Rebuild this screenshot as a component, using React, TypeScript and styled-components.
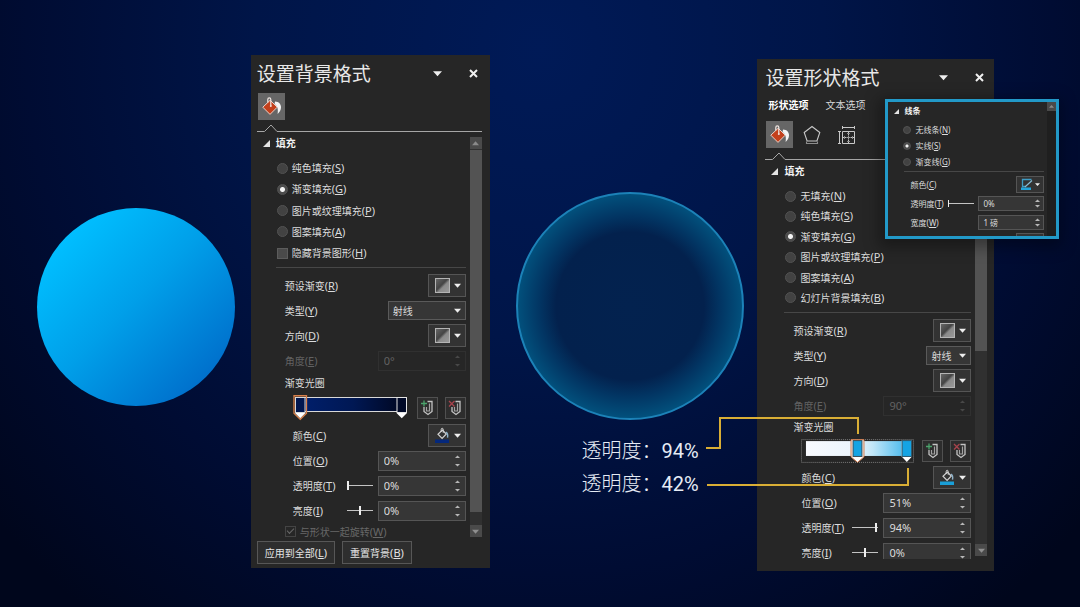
import React, { useId } from "react";
import styled, { createGlobalStyle, css } from "styled-components";

const GlobalStyle = createGlobalStyle`
  *, *::before, *::after { box-sizing: border-box; }
  body {
    margin: 0;
    background: #00061a;
    color: #dcdcdc;
    font-family: "Noto Sans", "Noto Sans CJK SC", sans-serif;
    font-size: 10px;
    line-height: 16px;
  }
  button, input, select { font: inherit; color: inherit; margin: 0; }
`;

/* ---------- slide ---------- */

const Slide = styled.main`
  min-height: 100vh;
  overflow: hidden;
  display: grid;
  grid-template-columns:
    minmax(8px, 37fr) 198px minmax(8px, 16fr) 239px minmax(8px, 26fr)
    228px minmax(8px, 14fr) 237px minmax(66px, 86fr);
  align-items: start;
  padding: 55px 0 36px;
  background: radial-gradient(ellipse 66% 120% at 50% 8%, #001a57 0%, #001548 40%, #000c33 72%, #00061c 100%);
`;

const SolidDisc = styled.div`
  grid-column: 2;
  margin-top: 153px;
  height: 198px;
  border-radius: 50%;
  background: linear-gradient(135deg, #00bfff 14%, #009fe9 48%, #0070cc 86%);
`;

const GlowColumn = styled.div`
  grid-column: 6;
  margin-top: 137px;
  display: flex;
  flex-direction: column;
`;

const GlowDisc = styled.div`
  height: 228px;
  border-radius: 50%;
  border: 2px solid #1c82b8;
  background: radial-gradient(circle closest-side, #03224f 0%, #03214d 66%, #023462 80%, #02507c 100%);
`;

const Callouts = styled.dl`
  margin: 15px 0 0 66px;
  color: #e6ecf5;
  font-family: Roboto, "Noto Sans CJK SC", sans-serif;
  font-size: 20px;
  font-weight: 300;
  line-height: 33px;
`;

const Callout = styled.div`
  display: flex;
  white-space: nowrap;
`;

const CalloutName = styled.dt``;

const CalloutValue = styled.dd`
  margin: 0;
  font-weight: 400;
`;

const Leader = styled.svg`
  position: absolute;
  left: -51px;
  top: 357px;
  pointer-events: none;
`;

/* ---------- panel shell ---------- */

const Panel = styled.section<{ $kind: "background" | "shape" }>`
  position: relative;
  display: flex;
  flex-direction: column;
  background: #262626;
  ${(p) =>
    p.$kind === "background"
      ? css`grid-column: 4; padding: 0 8px 4px 6px;`
      : css`grid-column: 8; margin-top: 4px; padding: 0 7px 12px 8px;`}
`;

const PanelHeader = styled.header`
  display: flex;
  align-items: center;
  height: 37px;
`;

const PanelTitle = styled.h2`
  flex: 1;
  margin: 0;
  font-size: 19px;
  line-height: 28px;
  font-weight: 400;
  color: #e8e8e8;
`;

const HeaderButton = styled.button`
  width: 16px;
  height: 16px;
  margin-left: 20px;
  padding: 0;
  border: 0;
  background: none;
  display: grid;
  place-items: center;
`;

const Tabs = styled.div`
  display: flex;
  gap: 17px;
  height: 24px;
  padding-left: 3px;
`;

const Tab = styled.button<{ $active?: boolean }>`
  height: 18px;
  padding: 0;
  border: 0;
  background: none;
  color: ${(p) => (p.$active ? "#ffffff" : "#d8d8d8")};
  font-weight: ${(p) => (p.$active ? 700 : 400)};
`;

const IconTabs = styled.div`
  display: flex;
  gap: 6px;
  margin: 1px 0 0 1px;
`;

const IconTab = styled.button<{ $active?: boolean }>`
  width: 27px;
  height: 27px;
  padding: 0;
  border: 0;
  display: block;
  background: ${(p) => (p.$active ? "#666666" : "transparent")};
  svg { display: block; }
`;

const NotchRule = styled.div`
  display: flex;
  height: 12px;
  svg { flex: none; display: block; }
  &::after {
    content: "";
    flex: 1;
    align-self: flex-end;
    height: 1px;
    background: #a6a6a6;
  }
`;

const Body = styled.div<{ $height: number }>`
  display: flex;
  gap: 4px;
  height: ${(p) => p.$height}px;
  overflow: hidden;
`;

const Content = styled.div`
  flex: 1;
  min-width: 0;
  display: flex;
  flex-direction: column;
  & > * { flex-shrink: 0; }
`;

const SectionTitle = styled.h3<{ $small?: boolean }>`
  display: flex;
  align-items: center;
  gap: ${(p) => (p.$small ? 5 : 6)}px;
  height: ${(p) => (p.$small ? 18 : 22)}px;
  margin: 0;
  padding-left: 6px;
  font-size: ${(p) => (p.$small ? 8 : 10)}px;
  font-weight: 700;
  color: #f2f2f2;
`;

const Mnemonic = styled.span`
  font-size: 11px;
`;

const Options = styled.div<{ $height: number; $small?: boolean }>`
  display: flex;
  flex-direction: column;
  justify-content: space-between;
  height: ${(p) => p.$height}px;
  margin: ${(p) => (p.$small ? "2px 0 0 15px" : "4px 0 0 20px")};
`;

const Option = styled.label<{ $small?: boolean; $dim?: boolean }>`
  display: flex;
  align-items: center;
  gap: 4px;
  height: ${(p) => (p.$small ? 16 : 20)}px;
  font-size: ${(p) => (p.$small ? 8 : 10)}px;
  color: ${(p) => (p.$dim ? "#686868" : "inherit")};
  white-space: nowrap;
  ${(p) => p.$small && css`${Mnemonic} { font-size: 8px; }`}
`;

const Radio = styled.input<{ $small?: boolean }>`
  appearance: none;
  flex: none;
  width: ${(p) => (p.$small ? 8 : 11)}px;
  height: ${(p) => (p.$small ? 8 : 11)}px;
  border: 1px solid #525252;
  border-radius: 50%;
  background: #424242;
  &:checked {
    background: radial-gradient(circle, #f4f4f4 ${(p) => (p.$small ? 1 : 2)}px, #4c4c4c ${(p) => (p.$small ? 2 : 3)}px);
  }
`;

const Check = styled.input`
  appearance: none;
  flex: none;
  width: 11px;
  height: 11px;
  border: 1px solid #5c5c5c;
  background: #4a4a4a;
  &:disabled { background: none; border-color: #444444; }
  &:checked::after {
    content: "";
    display: block;
    width: 7px;
    height: 4px;
    margin: 1px;
    border: solid #686868;
    border-width: 0 0 1px 1px;
    transform: rotate(-45deg);
  }
`;

const Divider = styled.hr<{ $small?: boolean }>`
  height: 1px;
  margin: ${(p) => (p.$small ? "1px 0 3px 16px" : "4px 0 5px 19px")};
  border: 0;
  background: #474747;
`;

const Row = styled.div<{ $indent: number; $height?: number; $small?: boolean; $dim?: boolean }>`
  display: flex;
  align-items: center;
  height: ${(p) => p.$height ?? (p.$small ? 19 : 25)}px;
  padding-left: ${(p) => p.$indent}px;
  font-size: ${(p) => (p.$small ? 8 : 10)}px;
  color: ${(p) => (p.$dim ? "#626262" : "inherit")};
  white-space: nowrap;
  ${(p) => p.$small && css`${Mnemonic} { font-size: 8px; }`}
`;

const RowLabel = styled.label`
  flex: 1;
`;

const DropButton = styled.button<{ $small?: boolean }>`
  display: flex;
  align-items: center;
  justify-content: space-between;
  width: ${(p) => (p.$small ? 28 : 38)}px;
  height: ${(p) => (p.$small ? 17 : 23)}px;
  padding: ${(p) => (p.$small ? "0 3px 0 4px" : "0 4px 0 6px")};
  border: 1px solid #555555;
  background: #333333;
  svg { display: block; }
`;

const SelectBox = styled.span<{ $wide?: boolean }>`
  display: grid;
  align-items: center;
  width: ${(p) => (p.$wide ? 78 : 45)}px;
  height: 19px;
  border: 1px solid #5a5a5a;
  background: #363636;
  select, svg { grid-area: 1 / 1; }
  select {
    appearance: none;
    width: 100%;
    height: 17px;
    padding: 0 0 0 4px;
    border: 0;
    background: none;
    line-height: 16px;
  }
  svg { justify-self: end; margin-right: 4px; pointer-events: none; }
`;

const SpinBox = styled.span<{ $small?: boolean; $dim?: boolean }>`
  display: flex;
  align-items: center;
  width: ${(p) => (p.$small ? 66 : 88)}px;
  height: ${(p) => (p.$small ? 15 : 20)}px;
  border: 1px solid ${(p) => (p.$dim ? "#303030" : "#555555")};
  background: ${(p) => (p.$dim ? "transparent" : "#363636")};
  font-size: ${(p) => (p.$small ? 8 : 11)}px;
  input {
    flex: 1;
    min-width: 0;
    height: 100%;
    padding: 0 0 0 ${(p) => (p.$small ? 4 : 5)}px;
    border: 0;
    background: none;
  }
`;

const Steppers = styled.span<{ $small?: boolean }>`
  display: flex;
  flex-direction: column;
  justify-content: space-between;
  width: ${(p) => (p.$small ? 11 : 15)}px;
  height: 100%;
`;

const Step = styled.button`
  display: grid;
  place-items: center;
  flex: 1;
  padding: 0;
  border: 0;
  background: none;
  svg { display: block; }
`;

const Range = styled.input<{ $small?: boolean }>`
  appearance: none;
  width: 26px;
  height: 10px;
  margin-right: ${(p) => (p.$small ? 4 : 5)}px;
  background: linear-gradient(#c4c4c4, #c4c4c4) center / 100% 1px no-repeat;
  &::-webkit-slider-thumb {
    appearance: none;
    width: ${(p) => (p.$small ? 1 : 2)}px;
    height: ${(p) => (p.$small ? 7 : 9)}px;
    background: #ededed;
  }
`;

const StopButton = styled.button`
  width: 21px;
  height: 22px;
  margin-left: 7px;
  padding: 0;
  border: 1px solid #505050;
  background: #2d2d2d;
  svg { display: block; }
`;

const StopTrack = styled.svg`
  display: block;
  margin-right: auto;
`;

const Scroll = styled.div<{ $small?: boolean }>`
  display: flex;
  flex-direction: column;
  width: ${(p) => (p.$small ? 9 : 12)}px;
  margin: ${(p) => (p.$small ? "0" : "5px 0 3px")};
  background: ${(p) => (p.$small ? "#1f1f1f" : "#303030")};
`;

const ScrollArrow = styled.button<{ $small?: boolean }>`
  display: grid;
  place-items: center;
  height: ${(p) => (p.$small ? 9 : 12)}px;
  padding: 0;
  border: 0;
  background: #4a4a4a;
  &:last-child:not(:first-child) { margin-top: auto; }
`;

const ScrollThumb = styled.div<{ $height: number }>`
  height: ${(p) => p.$height}px;
  margin-top: 1px;
  background: #535353;
`;

const Footer = styled.footer`
  display: flex;
  gap: 7px;
  padding-top: 1px;
`;

const FooterButton = styled.button`
  height: 23px;
  padding: 0 7px;
  border: 1px solid #575757;
  background: #2e2e2e;
  color: #e4e4e4;
  white-space: nowrap;
`;

const LinePopout = styled.aside`
  position: absolute;
  left: 128px;
  top: 40px;
  width: 174px;
  height: 140px;
  display: flex;
  gap: 3px;
  overflow: hidden;
  border: 3px solid #2299c8;
  background: #262626;
  box-shadow: -2px 4px 14px 4px rgba(0, 0, 0, 0.35);
`;

/* ---------- glyphs ---------- */

const DownArrow = ({ size = 7, color = "#eeeeee" }: { size?: number; color?: string }) => (
  <svg width={size} height={size} viewBox="0 0 8 8" aria-hidden="true">
    <path d="M0 2h8L4 6.500z" fill={color} />
  </svg>
);

const UpArrow = ({ size = 7 }: { size?: number }) => (
  <svg width={size} height={size} viewBox="0 0 8 8" aria-hidden="true">
    <path d="M0 6h8L4 1.500z" fill="#8a8a8a" />
  </svg>
);

const CloseIcon = () => (
  <svg width="9" height="9" viewBox="0 0 9 9" aria-hidden="true">
    <path d="M1 1l7 7M8 1L1 8" stroke="#f0f0f0" strokeWidth="2" />
  </svg>
);

const Disclosure = ({ size }: { size: number }) => (
  <svg width={size} height={size} viewBox="0 0 7 7" aria-hidden="true">
    <path d="M7 0v7H0z" fill="#e4e4e4" />
  </svg>
);

const BucketIcon = () => (
  <svg width="27" height="27" viewBox="0 0 27 27" aria-hidden="true">
    <path d="M17 8.500c4 .3 6 2.500 6 6 0 2.600-1.400 4.600-3.400 6.500.6-4.500.3-7.500-3-10z" fill="#f4f4f4" />
    <path d="M12.200 7.200l7 7-7.200 7.200-7.200-7.200z" fill="#c3401c" stroke="#ecd2c8" strokeWidth="1" />
    <path d="M9.800 9.500V6.600c0-2.200 3-2.200 3 0v5.900" fill="none" stroke="#f0e6e2" strokeWidth="1.200" />
    <circle cx="12.800" cy="13" r="1" fill="#f0e6e2" />
  </svg>
);

const PentagonIcon = () => (
  <svg width="27" height="27" viewBox="0 0 27 27" fill="none" stroke="#c8c8c8" strokeWidth="1.100" aria-hidden="true">
    <path d="M13 5.500l7.800 6-2.900 8.500H8.100l-2.900-8.500z" />
    <path d="M7.500 20.500v2.500M18.500 20.500v2.500M7.500 22.500h11" stroke="#8c8c8c" />
  </svg>
);

const SizeIcon = () => (
  <svg width="27" height="27" viewBox="0 0 27 27" fill="none" stroke="#c8c8c8" strokeWidth="1" aria-hidden="true">
    <path d="M10.500 10.500h12v12h-12zM10.500 6.500h12M10.500 5v3M22.500 5v3M7.500 10.500v12M6 10.500h3M6 22.500h3" />
    <path d="M16.500 10.500v4M16.500 18.500v4M10.500 16.500h4M18.500 16.500h4" />
    <path d="M16.500 15v3M15 16.500h3" stroke="#a0a0a0" />
    <path d="M12.500 15v3M20.500 15v3M15 12.500h3M15 20.500h3" stroke="#8c8c8c" />
  </svg>
);

const Notch = () => (
  <svg width="22" height="12" viewBox="0 0 22 12" fill="none" aria-hidden="true">
    <path d="M0 11.500h7.500L14 5l6 6.500h2" stroke="#a6a6a6" />
  </svg>
);

const SwatchIcon = () => {
  const id = useId();
  return (
    <svg width="15" height="15" viewBox="0 0 15 15" aria-hidden="true">
      <defs>
        <linearGradient id={id} x1="0" y1="0" x2="1" y2="1">
          <stop offset="0" stopColor="#6a6a6a" />
          <stop offset="0.450" stopColor="#444444" />
          <stop offset="0.580" stopColor="#8a8a8a" />
          <stop offset="1" stopColor="#9a9a9a" />
        </linearGradient>
      </defs>
      <rect x="0.500" y="0.500" width="14" height="14" fill={`url(#${id})`} stroke="#b4b4b4" />
    </svg>
  );
};

const FillIcon = ({ color }: { color: string }) => (
  <svg width="15" height="17" viewBox="0 0 15 17" fill="none" aria-hidden="true">
    <rect x="0" y="12.500" width="14" height="3.500" fill={color} />
    <path d="M7.300 3l4 4-4.200 4.300L3 7.200z" stroke="#d2d2d2" strokeWidth="1.200" />
    <path d="M6.200 5V2.200c0-1.200 2-1.200 2 0v3.600" stroke="#d2d2d2" />
    <path d="M11 5.200c1.600.8 2 2.800 1.500 5.500" stroke="#8fb4cc" strokeWidth="1.400" />
  </svg>
);

const PenIcon = () => (
  <svg width="12" height="13" viewBox="0 0 12 13" fill="none" aria-hidden="true">
    <rect y="9.500" width="10" height="2.500" fill="#22a5dc" />
    <path d="M10.500 1.500h-9v8M1.500 8.500h3" stroke="#3f9cc4" strokeWidth="1.300" />
    <path d="M11 2.500L5 8l-1 1" stroke="#86bcd4" strokeWidth="1.200" />
  </svg>
);

const StopIcon = ({ mode }: { mode: "add" | "remove" }) => (
  <svg width="19" height="20" viewBox="0 0 19 20" fill="none" aria-hidden="true">
    <path d="M6 9v4.500l4 3 4-3V3.500H9.500" stroke="#c4c4c4" strokeWidth="1.300" />
    <path d="M8.500 9v4h3V5.500" stroke="#a2a2a2" strokeWidth="1.200" />
    {mode === "add" ? (
      <path d="M6 2.500v6M3 5.500h6" stroke="#4ba36c" strokeWidth="1.300" />
    ) : (
      <path d="M3 3l5.500 5.500M8.500 3L3 8.500" stroke="#a8434c" strokeWidth="1.300" />
    )}
  </svg>
);

const Caret = ({ up, dim }: { up?: boolean; dim?: boolean }) => (
  <svg width="5" height="3" viewBox="0 0 5 3" aria-hidden="true">
    <path d={up ? "M0 3L2.500 0.500 5 3z" : "M0 0l2.500 2.500L5 0z"} fill={dim ? "#484848" : "#b8b8b8"} />
  </svg>
);

/* ---------- composed controls ---------- */

const Key = ({ text, k }: { text: string; k: string }) => (
  <span>
    {text}
    <Mnemonic>(<u>{k}</u>)</Mnemonic>
  </span>
);

type Choice = { text: string; k: string };

const RadioOptions = ({ items, checked, small }: { items: Choice[]; checked: string; small?: boolean }) => {
  const name = useId();
  return (
    <>
      {items.map((it) => (
        <Option key={it.k} $small={small}>
          <Radio type="radio" name={name} defaultChecked={it.k === checked} $small={small} />
          <Key {...it} />
        </Option>
      ))}
    </>
  );
};

const Spin = ({ id, value, small, dim }: { id: string; value: string; small?: boolean; dim?: boolean }) => (
  <SpinBox $small={small} $dim={dim}>
    <input id={id} type="text" defaultValue={value} disabled={dim} />
    <Steppers $small={small}>
      <Step aria-label="增加" disabled={dim}><Caret up dim={dim} /></Step>
      <Step aria-label="减少" disabled={dim}><Caret dim={dim} /></Step>
    </Steppers>
  </SpinBox>
);

type NumberRowProps = Choice & { value: string; slider?: number; indent: number; small?: boolean; dim?: boolean };

const NumberRow = ({ text, k, value, slider, indent, small, dim }: NumberRowProps) => {
  const id = useId();
  return (
    <Row $indent={indent} $small={small} $dim={dim}>
      <RowLabel htmlFor={id}><Key text={text} k={k} /></RowLabel>
      {slider !== undefined && <Range type="range" aria-label={text} defaultValue={slider} $small={small} />}
      <Spin id={id} value={value} small={small} dim={dim} />
    </Row>
  );
};

const ButtonRow = ({ text, k, indent, small, children }: Choice & { indent: number; small?: boolean; children: React.ReactNode }) => {
  const id = useId();
  return (
    <Row $indent={indent} $small={small}>
      <RowLabel htmlFor={id}><Key text={text} k={k} /></RowLabel>
      <DropButton id={id} $small={small}>
        {children}
        <DownArrow size={small ? 5 : 7} />
      </DropButton>
    </Row>
  );
};

const TypeRow = ({ wide }: { wide?: boolean }) => {
  const id = useId();
  return (
    <Row $indent={28}>
      <RowLabel htmlFor={id}><Key text="类型" k="Y" /></RowLabel>
      <SelectBox $wide={wide}>
        <select id={id} defaultValue="射线"><option>射线</option></select>
        <DownArrow />
      </SelectBox>
    </Row>
  );
};

const DarkStops = () => (
  <StopTrack width="116" height="26" viewBox="0 0 116 26" role="img" aria-label="渐变光圈">
    <defs>
      <linearGradient id="dark-stops">
        <stop offset="0" stopColor="#001f6c" />
        <stop offset="0.500" stopColor="#001854" />
        <stop offset="1" stopColor="#00061e" />
      </linearGradient>
    </defs>
    <rect x="7.500" y="2.500" width="105" height="14" fill="url(#dark-stops)" stroke="#d8d8d8" />
    <path d="M1 0.750h12.500v17.500l-6.250 6-6.250-6z" fill="none" stroke="#d9804a" strokeWidth="1.300" />
    <rect x="2.500" y="2.500" width="9.500" height="15" fill="#00164f" stroke="#d8d8d8" />
    <path d="M2 18h10.500l-5.250 5.250z" fill="#ffffff" />
    <rect x="104" y="2.500" width="9.500" height="15" fill="#000927" stroke="#e4e4e4" />
    <path d="M103.500 18h10.500l-5.250 5.250z" fill="#ffffff" />
  </StopTrack>
);

const LightStops = () => (
  <StopTrack width="115" height="26" viewBox="0 0 115 26" role="img" aria-label="渐变光圈">
    <defs>
      <linearGradient id="light-stops">
        <stop offset="0" stopColor="#f8fafe" />
        <stop offset="0.500" stopColor="#eaf4fc" />
        <stop offset="0.650" stopColor="#c0e6f8" />
        <stop offset="1" stopColor="#3cb4ea" />
      </linearGradient>
    </defs>
    <rect x="0.500" y="1.500" width="113" height="23" fill="none" stroke="#7d7d7d" strokeDasharray="1 1" />
    <rect x="5" y="3" width="104" height="15" fill="url(#light-stops)" />
    <path d="M50.500 1.500h13v17.500l-6.500 5.500-6.500-5.500z" fill="#ffffff" stroke="#c9764a" />
    <rect x="52.500" y="2.500" width="9" height="16" fill="#15a4e4" stroke="#3c4a52" />
    <path d="M101.500 2.500h10.500v16l-5.250 5.500-5.250-5.500z" fill="#ffffff" />
    <rect x="102" y="2.500" width="9.500" height="16" fill="#15a4e4" stroke="#2c566a" />
  </StopTrack>
);

type GradientProps = {
  wide?: boolean;
  angle: string;
  labelHeight: number;
  trackHeight: number;
  stops: React.ReactNode;
  color: string;
  position: string;
  transparency: number;
};

const GradientFields = (p: GradientProps) => (
  <>
    <ButtonRow text="预设渐变" k="R" indent={28}><SwatchIcon /></ButtonRow>
    <TypeRow wide={p.wide} />
    <ButtonRow text="方向" k="D" indent={28}><SwatchIcon /></ButtonRow>
    <NumberRow text="角度" k="E" value={p.angle} indent={28} dim />
    <Row $indent={28} $height={p.labelHeight}>渐变光圈</Row>
    <Row $indent={36} $height={p.trackHeight}>
      {p.stops}
      <StopButton aria-label="添加渐变光圈"><StopIcon mode="add" /></StopButton>
      <StopButton aria-label="删除渐变光圈"><StopIcon mode="remove" /></StopButton>
    </Row>
    <ButtonRow text="颜色" k="C" indent={36}><FillIcon color={p.color} /></ButtonRow>
    <NumberRow text="位置" k="O" value={p.position} indent={36} />
    <NumberRow text="透明度" k="T" value={`${p.transparency}%`} slider={p.transparency} indent={36} />
    <NumberRow text="亮度" k="I" value="0%" slider={50} indent={36} />
  </>
);

const ScrollBar = ({ thumb }: { thumb: number }) => (
  <Scroll>
    <ScrollArrow aria-label="向上滚动"><UpArrow /></ScrollArrow>
    <ScrollThumb $height={thumb} />
    <ScrollArrow aria-label="向下滚动"><DownArrow color="#8f8f8f" /></ScrollArrow>
  </Scroll>
);

const Header = ({ title }: { title: string }) => (
  <PanelHeader>
    <PanelTitle>{title}</PanelTitle>
    <HeaderButton aria-label="任务窗格选项"><DownArrow size={9} /></HeaderButton>
    <HeaderButton aria-label="关闭"><CloseIcon /></HeaderButton>
  </PanelHeader>
);

const BackgroundPanel = () => (
  <Panel $kind="background">
    <Header title="设置背景格式" />
    <IconTabs>
      <IconTab $active aria-label="填充"><BucketIcon /></IconTab>
    </IconTabs>
    <NotchRule><Notch /></NotchRule>
    <Body $height={408}>
      <Content>
        <SectionTitle><Disclosure size={7} />填充</SectionTitle>
        <Options $height={105} role="group" aria-label="填充">
          <RadioOptions
            checked="G"
            items={[
              { text: "纯色填充", k: "S" },
              { text: "渐变填充", k: "G" },
              { text: "图片或纹理填充", k: "P" },
              { text: "图案填充", k: "A" },
            ]}
          />
          <Option><Check type="checkbox" /><Key text="隐藏背景图形" k="H" /></Option>
        </Options>
        <Divider />
        <GradientFields
          wide
          angle="0°"
          labelHeight={20}
          trackHeight={30}
          stops={<DarkStops />}
          color="#04287c"
          position="0%"
          transparency={0}
        />
        <Row $indent={28} $height={17}>
          <Option $dim><Check type="checkbox" defaultChecked disabled /><Key text="与形状一起旋转" k="W" /></Option>
        </Row>
      </Content>
      <ScrollBar thumb={362} />
    </Body>
    <Footer>
      <FooterButton><Key text="应用到全部" k="L" /></FooterButton>
      <FooterButton><Key text="重置背景" k="B" /></FooterButton>
    </Footer>
  </Panel>
);

const LineSettings = () => (
  <LinePopout>
    <Content>
      <SectionTitle $small><Disclosure size={5} />线条</SectionTitle>
      <Options $height={48} $small role="radiogroup" aria-label="线条">
        <RadioOptions
          small
          checked="S"
          items={[
            { text: "无线条", k: "N" },
            { text: "实线", k: "S" },
            { text: "渐变线", k: "G" },
          ]}
        />
      </Options>
      <Divider $small />
      <ButtonRow text="颜色" k="C" indent={22} small><PenIcon /></ButtonRow>
      <NumberRow text="透明度" k="T" value="0%" slider={0} indent={22} small />
      <NumberRow text="宽度" k="W" value="1 磅" indent={22} small />
      <Row $indent={22} $small>
        <RowLabel />
        <DropButton $small aria-label="复合类型" />
      </Row>
    </Content>
    <Scroll $small>
      <ScrollArrow $small aria-label="向上滚动"><UpArrow size={5} /></ScrollArrow>
    </Scroll>
  </LinePopout>
);

const ShapePanel = () => (
  <Panel $kind="shape">
    <Header title="设置形状格式" />
    <Tabs>
      <Tab $active>形状选项</Tab>
      <Tab>文本选项</Tab>
    </Tabs>
    <IconTabs>
      <IconTab $active aria-label="填充与线条"><BucketIcon /></IconTab>
      <IconTab aria-label="效果"><PentagonIcon /></IconTab>
      <IconTab aria-label="大小与属性"><SizeIcon /></IconTab>
    </IconTabs>
    <NotchRule><Notch /></NotchRule>
    <Body $height={399}>
      <Content>
        <SectionTitle><Disclosure size={7} />填充</SectionTitle>
        <Options $height={122} role="radiogroup" aria-label="填充">
          <RadioOptions
            checked="G"
            items={[
              { text: "无填充", k: "N" },
              { text: "纯色填充", k: "S" },
              { text: "渐变填充", k: "G" },
              { text: "图片或纹理填充", k: "P" },
              { text: "图案填充", k: "A" },
              { text: "幻灯片背景填充", k: "B" },
            ]}
          />
        </Options>
        <Divider />
        <GradientFields
          angle="90°"
          labelHeight={18}
          trackHeight={29}
          stops={<LightStops />}
          color="#1a9fd8"
          position="51%"
          transparency={94}
        />
      </Content>
      <ScrollBar thumb={173} />
    </Body>
    <LineSettings />
    <Leader width="206" height="72" viewBox="0 0 206 72" fill="none" stroke="#d9ae35" strokeWidth="2" aria-hidden="true">
      <path d="M0 32h14V2h138v16" />
      <path d="M1 69h201V52" />
    </Leader>
  </Panel>
);

export default function App() {
  return (
    <>
      <GlobalStyle />
      <Slide>
        <SolidDisc />
        <BackgroundPanel />
        <GlowColumn>
          <GlowDisc />
          <Callouts>
            <Callout><CalloutName>透明度：</CalloutName><CalloutValue>94%</CalloutValue></Callout>
            <Callout><CalloutName>透明度：</CalloutName><CalloutValue>42%</CalloutValue></Callout>
          </Callouts>
        </GlowColumn>
        <ShapePanel />
      </Slide>
    </>
  );
}
